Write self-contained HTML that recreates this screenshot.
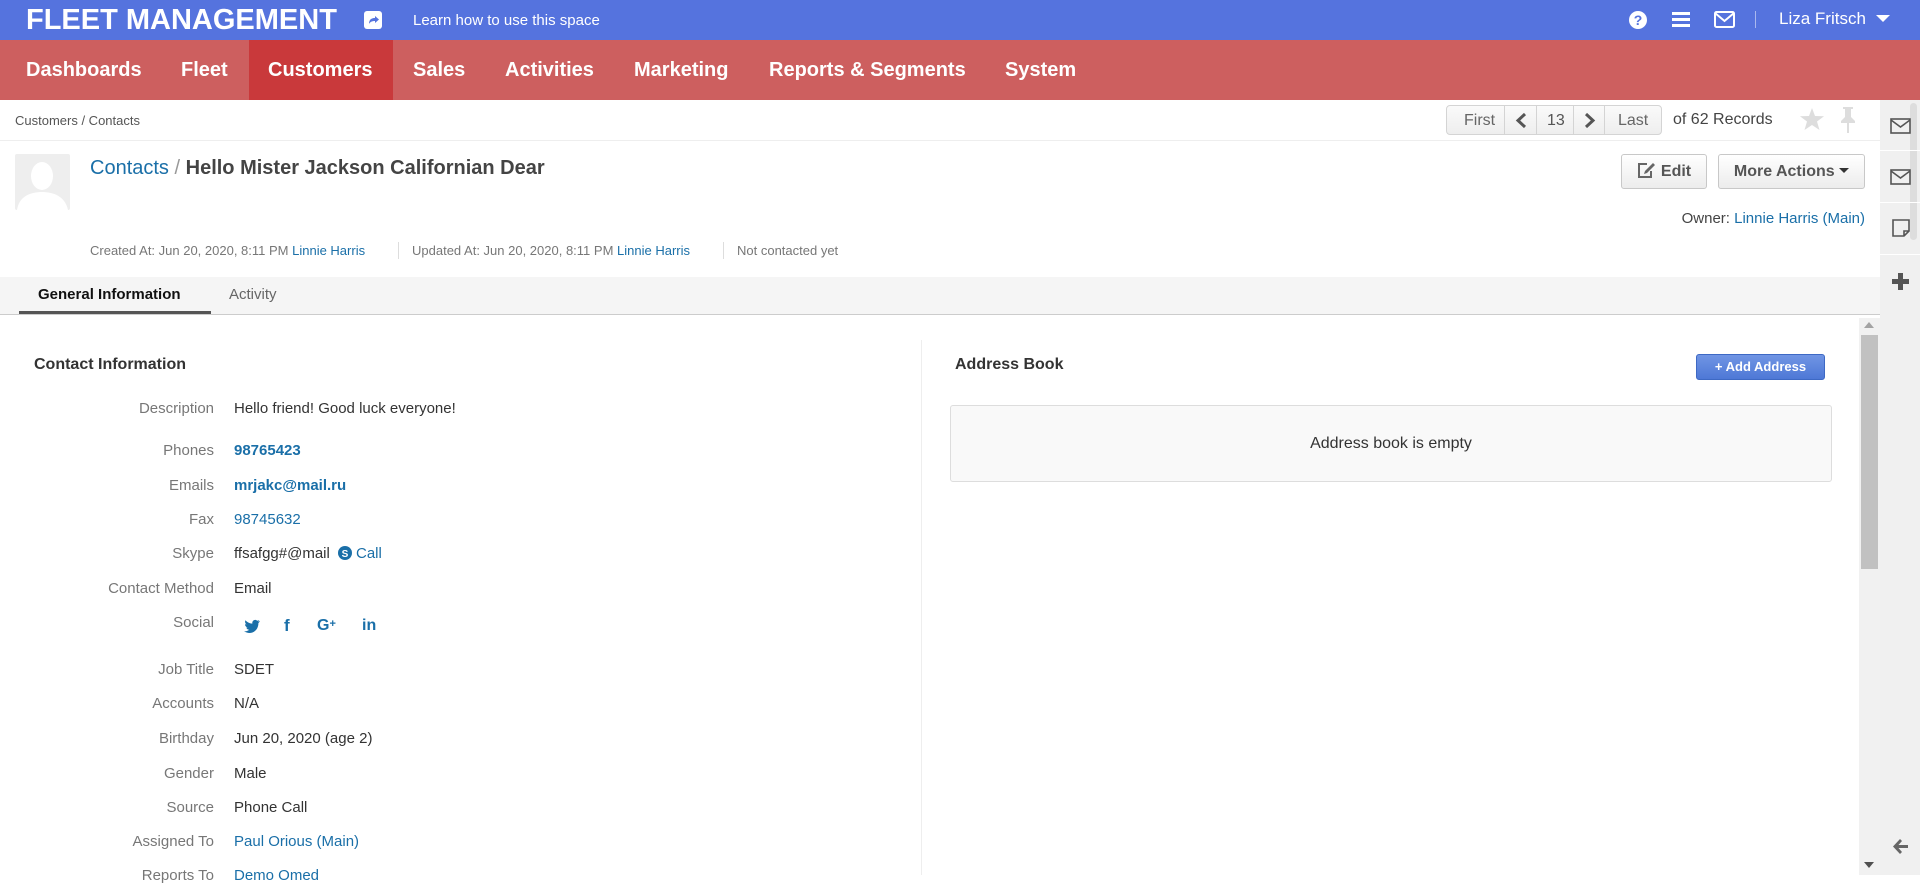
<!DOCTYPE html>
<html><head><meta charset="utf-8"><style>
*{box-sizing:border-box;margin:0;padding:0}
body{width:1920px;height:875px;overflow:hidden;font-family:"Liberation Sans",Arial,sans-serif;background:#fff;position:relative;color:#333}
.a{position:absolute;white-space:nowrap}
a,.lk{color:#1a6fa8;text-decoration:none}
#top{left:0;top:0;width:1920px;height:40px;background:#5573de}
#nav{left:0;top:40px;width:1920px;height:60px;background:#cd5f5f}
.ni{position:absolute;top:40px;height:60px;line-height:60px;color:#fff;font-weight:bold;font-size:20px}
.btn{border:1px solid #c8c8c8;border-radius:3px;background:linear-gradient(#fff,#ececec);color:#555;font-weight:bold;font-size:16px;text-align:center}
.lbl{position:absolute;right:1706px;font-size:15px;color:#777;white-space:nowrap}
.val{position:absolute;left:234px;font-size:15px;color:#333;white-space:nowrap}
</style></head><body>
<div id="top" class="a"></div>
<div class="a" style="left:26px;top:3px;color:#fff;font-weight:bold;font-size:29px;line-height:34px">FLEET MANAGEMENT</div>
<div class="a" style="left:364px;top:11px;width:18px;height:18px;background:#fff;border-radius:3px"><svg width="18" height="18" viewBox="0 0 18 18"><path d="M5 13 C5 8 8 7 11 7 V5 L15 8.5 L11 12 V10 C8 10 6 11 5 13Z" fill="#5573de"/></svg></div>
<div class="a" style="left:413px;top:12px;color:#fff;font-size:15px">Learn how to use this space</div>
<svg class="a" style="left:1628px;top:10px" width="20" height="20" viewBox="0 0 20 20"><circle cx="10" cy="10" r="9" fill="#fff"/><text x="10" y="15" font-family="Liberation Sans" font-weight="bold" font-size="14" fill="#5573de" text-anchor="middle">?</text></svg>
<svg class="a" style="left:1672px;top:11px" width="18" height="17"><rect y="1" width="18" height="3" fill="#fff"/><rect y="7" width="18" height="3" fill="#fff"/><rect y="13" width="18" height="3" fill="#fff"/></svg>
<svg class="a" style="left:1714px;top:11px" width="21" height="17"><rect x="1" y="1" width="19" height="15" rx="1.5" fill="none" stroke="#fff" stroke-width="2"/><path d="M1 2 L10.5 10 L20 2" fill="none" stroke="#fff" stroke-width="2"/></svg>
<div class="a" style="left:1755px;top:11px;width:1px;height:17px;background:#aab8ee"></div>
<div class="a" style="left:1779px;top:9px;color:#fff;font-size:17px">Liza Fritsch</div>
<svg class="a" style="left:1876px;top:15px" width="14" height="8"><path d="M0 0 H14 L7 7Z" fill="#fff"/></svg>

<div id="nav" class="a"></div>
<div class="a" style="left:249px;top:40px;width:144px;height:60px;background:#c9393b"></div>
<div class="ni" style="left:26px">Dashboards</div>
<div class="ni" style="left:181px">Fleet</div>
<div class="ni" style="left:268px">Customers</div>
<div class="ni" style="left:413px">Sales</div>
<div class="ni" style="left:505px">Activities</div>
<div class="ni" style="left:634px">Marketing</div>
<div class="ni" style="left:769px">Reports &amp; Segments</div>
<div class="ni" style="left:1005px">System</div>

<div class="a" style="left:15px;top:113px;font-size:13px;color:#555">Customers / Contacts</div>
<div class="a" style="left:0;top:140px;width:1880px;height:1px;background:#eee"></div>
<div class="a" style="left:1446px;top:105px;width:216px;height:30px;border:1px solid #d4d4d4;border-radius:4px;background:linear-gradient(#fafafa,#eee);font-size:16px;color:#666">
<span class="a" style="left:17px;top:6px">First</span>
<span class="a" style="left:57px;top:0;width:1px;height:28px;background:#d4d4d4"></span>
<svg class="a" style="left:68px;top:7px" width="12" height="15"><path d="M10 1 L3 7.5 L10 14" fill="none" stroke="#555" stroke-width="3"/></svg>
<span class="a" style="left:89px;top:0;width:1px;height:28px;background:#d4d4d4"></span>
<span class="a" style="left:100px;top:6px;color:#555">13</span>
<span class="a" style="left:126px;top:0;width:1px;height:28px;background:#d4d4d4"></span>
<svg class="a" style="left:137px;top:7px" width="12" height="15"><path d="M2 1 L9 7.5 L2 14" fill="none" stroke="#555" stroke-width="3"/></svg>
<span class="a" style="left:157px;top:0;width:1px;height:28px;background:#d4d4d4"></span>
<span class="a" style="left:171px;top:6px">Last</span>
</div>
<div class="a" style="left:1673px;top:111px;font-size:16px;color:#444">of 62 Records</div>
<svg class="a" style="left:1800px;top:108px" width="24" height="22" viewBox="0 0 24 22"><path d="M12 0 L15 8 L24 8.3 L17 13.5 L19.5 22 L12 17 L4.5 22 L7 13.5 L0 8.3 L9 8Z" fill="#ddd"/></svg>
<svg class="a" style="left:1840px;top:107px" width="16" height="26" viewBox="0 0 16 26"><path d="M3 0 H13 V2 H11 V10 L15 14 V16 H1 V14 L5 10 V2 H3Z M7 16 H9 V26 H7Z" fill="#ddd"/></svg>

<div class="a" style="left:15px;top:154px;width:55px;height:56px;background:#eee;border-radius:2px;overflow:hidden"><svg width="55" height="56"><ellipse cx="27" cy="22" rx="11" ry="14" fill="#fff"/><path d="M2 56 C4 42 16 38 27 38 C38 38 50 42 53 56Z" fill="#fff"/></svg></div>
<div class="a" style="left:90px;top:157px;font-size:20px"><span class="lk">Contacts</span> <span style="color:#999">/</span> <b style="color:#444">Hello Mister Jackson Californian Dear</b></div>
<div class="btn a" style="left:1621px;top:154px;width:86px;height:35px;line-height:33px"><svg style="vertical-align:-3px;margin-right:5px" width="19" height="17" viewBox="0 0 19 17"><path d="M10 2 H2 V15 H14 V9" fill="none" stroke="#666" stroke-width="2"/><path d="M16 1 L18 3 L10 11 L7 12 L8 9Z" fill="#666"/></svg>Edit</div>
<div class="btn a" style="left:1718px;top:154px;width:147px;height:35px;line-height:33px">More Actions <svg style="vertical-align:2px" width="10" height="6"><path d="M0 0H10L5 5Z" fill="#333"/></svg></div>
<div class="a" style="left:1679px;top:210px;font-size:15px;color:#444;width:186px;text-align:right">Owner: <span class="lk">Linnie Harris (Main)</span></div>
<div class="a" style="left:90px;top:243px;font-size:13px;color:#777">Created At: Jun 20, 2020, 8:11 PM <span class="lk">Linnie Harris</span></div>
<div class="a" style="left:398px;top:242px;width:1px;height:17px;background:#ddd"></div>
<div class="a" style="left:412px;top:243px;font-size:13px;color:#777">Updated At: Jun 20, 2020, 8:11 PM <span class="lk">Linnie Harris</span></div>
<div class="a" style="left:723px;top:242px;width:1px;height:17px;background:#ddd"></div>
<div class="a" style="left:737px;top:243px;font-size:13px;color:#777">Not contacted yet</div>

<div class="a" style="left:0;top:277px;width:1880px;height:38px;background:#f5f5f5;border-bottom:1px solid #ccc"></div>
<div class="a" style="left:38px;top:286px;font-size:15px;font-weight:bold;color:#111">General Information</div>
<div class="a" style="left:19px;top:311px;width:192px;height:3px;background:#555"></div>
<div class="a" style="left:229px;top:286px;font-size:15px;color:#666">Activity</div>

<div class="a" style="left:34px;top:356px;font-size:16px;font-weight:bold;color:#333">Contact Information</div>
<div class="a" style="left:921px;top:340px;width:1px;height:535px;background:#eee"></div>
<div class="lbl" style="top:400px">Description</div><div class="val" style="top:400px">Hello friend! Good luck everyone!</div>
<div class="lbl" style="top:442px">Phones</div><div class="val lk" style="top:442px;font-weight:bold;color:#1a6fa8">98765423</div>
<div class="lbl" style="top:477px">Emails</div><div class="val lk" style="top:477px;font-weight:bold;color:#1a6fa8">mrjakc@mail.ru</div>
<div class="lbl" style="top:511px">Fax</div><div class="val" style="top:511px;color:#1a6fa8">98745632</div>
<div class="lbl" style="top:545px">Skype</div><div class="val" style="top:545px">ffsafgg#@mail <svg style="vertical-align:-2px;margin:0 4px 0 4px" width="14" height="14"><circle cx="7" cy="7" r="7" fill="#1a6fa8"/><text x="7" y="11" font-family="Liberation Sans" font-weight="bold" font-size="10" fill="#fff" text-anchor="middle">S</text></svg><span class="lk">Call</span></div>
<div class="lbl" style="top:580px">Contact Method</div><div class="val" style="top:580px">Email</div>
<div class="lbl" style="top:614px">Social</div>
<div class="a" style="left:244px;top:617px;font-size:16px;font-weight:bold;color:#1a6fa8">
<svg class="a" style="left:0;top:2px" width="16" height="14" viewBox="0 0 16 14"><path d="M16 2 C15 2.5 14.5 2.6 14 2.7 C14.6 2.3 15 1.6 15.3 1 C14.6 1.4 14 1.7 13.2 1.8 C11.7 0 8.7 0.8 8.3 3.5 C8.2 4 8.3 4.4 8.4 4.6 C5.6 4.5 3.2 3.2 1.5 1.2 C0.6 2.8 1.2 4.6 2.5 5.5 C2 5.5 1.5 5.3 1 5.1 C1 6.8 2.2 8.1 3.6 8.4 C3.1 8.6 2.6 8.6 2.2 8.5 C2.6 9.8 3.9 10.8 5.3 10.8 C3.8 12 2 12.5 0 12.3 C6.5 16.5 14.5 12.5 14.4 4 C15 3.5 15.6 2.8 16 2Z" fill="#1a6fa8"/></svg>
<span class="a" style="left:40px;top:-1px;font-size:17px">f</span>
<span class="a" style="left:73px;top:0">G<span style="font-size:11px;vertical-align:3px">+</span></span>
<span class="a" style="left:118px;top:0">in</span>
</div>
<div class="lbl" style="top:661px">Job Title</div><div class="val" style="top:661px">SDET</div>
<div class="lbl" style="top:695px">Accounts</div><div class="val" style="top:695px">N/A</div>
<div class="lbl" style="top:730px">Birthday</div><div class="val" style="top:730px">Jun 20, 2020 (age 2)</div>
<div class="lbl" style="top:765px">Gender</div><div class="val" style="top:765px">Male</div>
<div class="lbl" style="top:799px">Source</div><div class="val" style="top:799px">Phone Call</div>
<div class="lbl" style="top:833px">Assigned To</div><div class="val" style="top:833px;color:#1a6fa8">Paul Orious (Main)</div>
<div class="lbl" style="top:867px">Reports To</div><div class="val" style="top:867px;color:#1a6fa8">Demo Omed</div>

<div class="a" style="left:955px;top:356px;font-size:16px;font-weight:bold;color:#333">Address Book</div>
<div class="a" style="left:1696px;top:354px;width:129px;height:26px;border:1px solid #3e69c4;border-radius:3px;background:linear-gradient(#7095e4,#4e78d6);color:#fff;font-size:13px;font-weight:bold;text-align:center;line-height:24px">+ Add Address</div>
<div class="a" style="left:950px;top:405px;width:882px;height:77px;border:1px solid #ddd;border-radius:3px;background:#f9f9f9;font-size:16px;color:#333;text-align:center;line-height:75px">Address book is empty</div>

<div class="a" style="left:1859px;top:318px;width:21px;height:557px;background:#f1f1f1"></div>
<svg class="a" style="left:1864px;top:322px" width="10" height="6"><path d="M0 6H10L5 0Z" fill="#a3a3a3"/></svg>
<div class="a" style="left:1861px;top:335px;width:17px;height:234px;background:#c1c1c1"></div>
<svg class="a" style="left:1864px;top:862px" width="10" height="6"><path d="M0 0H10L5 6Z" fill="#505050"/></svg>

<div class="a" style="left:1880px;top:100px;width:40px;height:775px;background:#f0f0f0"></div>
<div class="a" style="left:1910px;top:103px;width:7px;height:137px;background:#ddd;border-radius:4px"></div>
<div class="a" style="left:1880px;top:150px;width:40px;height:1px;background:#fff"></div>
<div class="a" style="left:1880px;top:202px;width:40px;height:1px;background:#fff"></div>
<div class="a" style="left:1880px;top:254px;width:40px;height:1px;background:#fff"></div>
<svg class="a" style="left:1890px;top:118px" width="21" height="17"><rect x="1" y="1" width="19" height="14" fill="none" stroke="#555" stroke-width="1.6"/><path d="M1 2 L10.5 9 L20 2" fill="none" stroke="#555" stroke-width="1.6"/></svg>
<svg class="a" style="left:1890px;top:169px" width="21" height="17"><rect x="1" y="1" width="19" height="14" fill="none" stroke="#555" stroke-width="1.6"/><path d="M1 2 L10.5 9 L20 2" fill="none" stroke="#555" stroke-width="1.6"/></svg>
<svg class="a" style="left:1892px;top:219px" width="18" height="18"><path d="M1 1 H17 V12 L12 17 H1Z M17 12 H12 V17" fill="none" stroke="#555" stroke-width="1.6"/></svg>
<svg class="a" style="left:1892px;top:273px" width="17" height="17"><rect x="6" y="0" width="5" height="17" fill="#555"/><rect x="0" y="6" width="17" height="5" fill="#555"/></svg>
<svg class="a" style="left:1892px;top:838px" width="17" height="17" viewBox="0 0 17 17"><path d="M8 1 L1 8.5 L8 16 L10 14 L6.5 10 H16 V7 H6.5 L10 3Z" fill="#666"/></svg>
</body></html>
